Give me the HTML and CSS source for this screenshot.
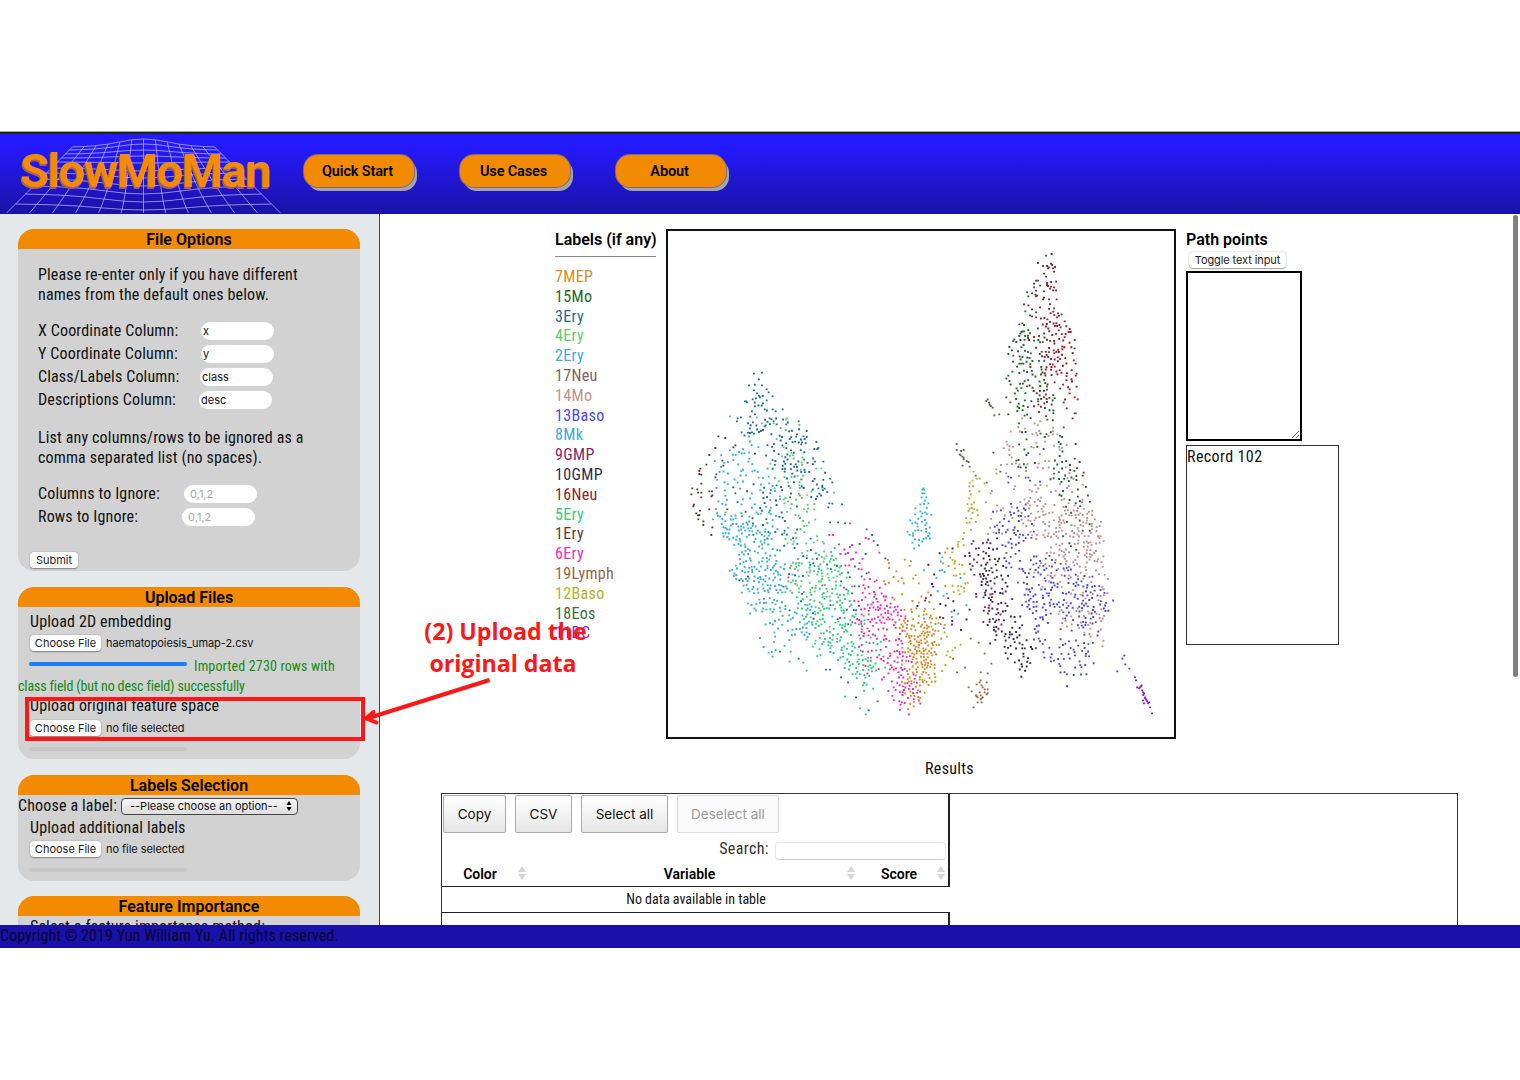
FILE: index.html
```html
<!DOCTYPE html>
<html lang="en">
<head>
<meta charset="utf-8">
<title>SlowMoMan</title>
<link rel="stylesheet" href="styles.css">
</head>
<body>
<div class="app">
  <header class="header">
    <div class="logo">
      <svg class="logo-grid" viewBox="0 0 285 77" width="285" height="77"><path id="grid"></path></svg>
      <span class="logo-text">SlowMoMan</span>
    </div>
    <nav class="nav">
      <a class="nav-btn">Quick Start</a>
      <a class="nav-btn">Use Cases</a>
      <a class="nav-btn">About</a>
    </nav>
  </header>

  <div class="body">
    <aside class="sidebar">
      <section class="card card-options">
        <h2 class="card-title">File Options</h2>
        <div class="options">
          <p class="para">Please re-enter only if you have different<br>names from the default ones below.</p>
          <div class="fields">
            <div class="field"><span class="name w-x">X Coordinate Column:</span><span class="input">x</span></div>
            <div class="field"><span class="name w-x">Y Coordinate Column:</span><span class="input">y</span></div>
            <div class="field"><span class="name w-class">Class/Labels Column:</span><span class="input">class</span></div>
            <div class="field"><span class="name w-desc">Descriptions Column:</span><span class="input">desc</span></div>
          </div>
          <p class="para">List any columns/rows to be ignored as a<br>comma separated list (no spaces).</p>
          <div class="fields">
            <div class="field"><span class="name w-cols">Columns to Ignore:</span><span class="input hint">0,1,2</span></div>
            <div class="field"><span class="name w-rows">Rows to Ignore:</span><span class="input hint">0,1,2</span></div>
          </div>
        </div>
        <button class="btn submit">Submit</button>
      </section>

      <section class="card card-upload">
        <h2 class="card-title">Upload Files</h2>
        <div class="upload-name">Upload 2D embedding</div>
        <div class="file"><button class="btn choose">Choose File</button><span>haematopoiesis_umap-2.csv</span></div>
        <div class="imported"><span class="bar bar-full"></span><span class="imported-first">Imported 2730 rows with</span><br><span class="imported-rest">class field (but no desc field) successfully</span></div>
        <div class="upload-name second">Upload original feature space</div>
        <div class="file"><button class="btn choose">Choose File</button><span>no file selected</span></div>
        <span class="bar bar-empty"></span>
      </section>

      <section class="card card-labels">
        <h2 class="card-title">Labels Selection</h2>
        <div class="choose-label"><span class="choose-name">Choose a label:</span>
          <span class="select">--Please choose an option--<svg width="6" height="10" viewBox="0 0 6 10"><path d="M3 0L5.6 4H.4zM3 10L.4 6h5.2z"/></svg></span></div>
        <div class="upload-name third">Upload additional labels</div>
        <div class="file"><button class="btn choose">Choose File</button><span>no file selected</span></div>
        <span class="bar bar-empty"></span>
      </section>

      <section class="card card-feature">
        <h2 class="card-title">Feature Importance</h2>
        <div class="upload-name method">Select a feature importance method:</div>
      </section>
    </aside>

    <main class="main">
      <div class="top">
        <div class="legend">
          <h3 class="head">Labels (if any)</h3>
          <div class="rule"></div>
          <ul class="legend-list" id="legend"></ul>
        </div>
        <div class="plot"><svg id="plot" viewBox="0 0 506 506" width="506" height="506"></svg></div>
        <div class="path">
          <h3 class="head">Path points</h3>
          <button class="btn toggle">Toggle text input</button>
          <textarea class="points"></textarea>
          <div class="record">Record 102</div>
        </div>
      </div>
      <div class="results-title">Results</div>
      <div class="results">
        <div class="table">
          <div class="tools">
            <button class="tool t-copy">Copy</button><button class="tool t-csv">CSV</button><button class="tool t-sel">Select all</button><button class="tool t-des off">Deselect all</button>
          </div>
          <div class="search"><span>Search:</span><span class="search-input"></span></div>
          <div class="thead">
            <div class="th th-color"><b>Color</b><svg class="sort" viewBox="0 0 8 14"><path d="M4 0l4 6H0zM4 14L0 8h8z"/></svg></div>
            <div class="th th-var"><b>Variable</b><svg class="sort" viewBox="0 0 8 14"><path d="M4 0l4 6H0zM4 14L0 8h8z"/></svg></div>
            <div class="th th-score"><b>Score</b><svg class="sort" viewBox="0 0 8 14"><path d="M4 0l4 6H0zM4 14L0 8h8z"/></svg></div>
          </div>
          <div class="empty">No data available in table</div>
          <div class="tfoot"></div>
        </div>
      </div>
      <div class="scrollbar"></div>
    </main>
  </div>
  <footer class="footer">Copyright © 2019 Yun William Yu. All rights reserved.</footer>
</div>

<div class="mark-box"></div>
<svg class="mark-arrow" width="140" height="60" viewBox="0 0 140 60"><path class="shaft" d="M128.500 10L6 48.500"/><path d="M12.500 42L5 48.500L15.500 52.500"/></svg>
<div class="mark-text">(2) Upload the<br><span class="mark-second">original data</span></div>
<script src="script.js"></script>
</body>
</html>
```
FILE: styles.css
```css
* { box-sizing: border-box; }
body {
  margin: 0;
  padding-top: 131px;
  height: 1080px;
  overflow: hidden;
  background: #fff;
  color: #111;
  font: 16px/20px Roboto, "Liberation Sans", sans-serif;
  font-stretch: 75%;
  letter-spacing: .15px;
  white-space: nowrap;
}
h2, h3, p, ul { margin: 0; padding: 0; }
ul { list-style: none; }
button { font: inherit; padding: 0; color: #222; }

.app { height: 817px; display: flex; flex-direction: column; border-top: 1px solid #9aa3a3; }
.header {
  height: 82px;
  flex: none;
  display: flex;
  border-top: 2px solid #24211f;
  border-bottom: 1px solid #1510b0;
  background: linear-gradient(#241aff, #2419f4 25%, #1a12a6);
}
.logo { width: 304px; position: relative; padding: 10px 0 0 20px; }
.logo-grid { position: absolute; left: 0; top: 2px; }
.logo-grid path { fill: none; stroke: #c9c4ff; stroke-width: .9; opacity: .75; }
.logo-text {
  position: relative;
  display: block;
  font: 700 47px/54px Roboto, sans-serif;
  font-stretch: 100%;
  letter-spacing: -1.400px;
  color: #f28b02;
  text-shadow: -1px 2px 0 #a35b6d;
}
.nav { display: flex; gap: 46px; padding-top: 21px; }
.nav-btn {
  width: 110px;
  height: 32px;
  padding-right: 3px;
  border-radius: 14px;
  background: #f28b02;
  box-shadow: 0 0 0 1px #7b6a7c, 3px 4px 0 #a3a3a8;
  color: #000;
  font-size: 14.500px;
  font-weight: 600;
  font-stretch: 100%;
  letter-spacing: -.15px;
  line-height: 33px;
  text-align: center;
}

.body { flex: 1; min-height: 0; display: flex; overflow: hidden; }
.sidebar {
  width: 380px;
  flex: none;
  padding: 15px 0 0 18px;
  background: #e4e8eb;
  border-right: 1px solid #444;
  overflow: hidden;
}
.card { width: 342px; border-radius: 16px; background: #d2d2d2; overflow: hidden; }
.card-title { height: 20px; background: #f28b02; color: #000; font-size: 16px; font-weight: 600; font-stretch: 100%; letter-spacing: 0; line-height: 21px; text-align: center; }
.card-options { height: 342px; margin-bottom: 16px; }
.card-upload { height: 172px; margin-bottom: 16px; }
.card-labels { height: 106px; margin-bottom: 15px; }
.card-feature { height: 90px; }
.options { padding: 16px 20px 0; }
.fields { margin: 14px 0 17px; }
.field { height: 23px; display: flex; align-items: center; }
.input {
  width: 73px;
  height: 18px;
  margin-top: 1px;
  padding-left: 2px;
  border-radius: 9px;
  background: #fff;
  font: 11px/19px Inter, sans-serif;
  letter-spacing: 0;
}
.hint { padding-left: 6px; color: #a9a9a9; }
.w-x { width: 163px; }
.w-class { width: 162px; }
.w-desc { width: 161px; }
.w-cols { width: 146px; }
.w-rows { width: 144px; }
.btn {
  height: 16px;
  border: 0;
  border-radius: 4px;
  background: #fff;
  box-shadow: 0 .5px 1.500px rgba(0, 0, 0, .4);
  font: 11px/16px Inter, sans-serif;
  display: block;
}
.submit { width: 48px; margin: 24px 0 0 12px; }
.upload-name { padding: 4px 0 0 12px; height: 25px; line-height: 22px; }
.method { padding-top: 0; }
.file { display: flex; gap: 5px; padding-left: 12px; height: 24px; padding-top: 3px; font: 11px/16px Inter, sans-serif; letter-spacing: -.05px; }
.choose { width: 71px; }
.bar { display: block; width: 158px; height: 4px; margin: 8px 0 0 11px; border-radius: 2px; }
.bar-full { display: inline-block; vertical-align: 5px; margin: 0 7px 0 11px; background: #1a7dfa; }
.bar-empty { background: #c6c6c6; margin-top: 6px; }
.imported { height: 40px; color: #138a13; font-size: 14px; line-height: 20px; }
.imported-rest { letter-spacing: -.14px; }
.second { height: 21px; padding-top: 0; line-height: 19px; }
.choose-label { display: flex; height: 22px; align-items: center; }
.choose-name { width: 103px; }
.select {
  width: 177px;
  height: 17px;
  border: 1px solid #444;
  border-radius: 4px;
  background: linear-gradient(#f5f5f5, #dedede);
  display: flex;
  align-items: center;
  justify-content: space-between;
  padding: 0 5px 0 8px;
  font: 11px/15px Inter, sans-serif;
  letter-spacing: 0;
}
.third { padding-top: 0; height: 21px; line-height: 21px; }

.main { flex: 1; position: relative; overflow: hidden; }
.top { display: flex; padding: 15px 0 0 175px; height: 540px; }
.head { font-size: 16px; font-weight: 600; font-stretch: 100%; letter-spacing: 0; line-height: 21px; height: 20px; color: #000; }
.legend { width: 101px; margin-right: 10px; }
.rule { height: 1px; margin: 7px 0 10px; background: #8a8a8a; }
.legend-list li { height: 19.8px; line-height: 19px; letter-spacing: .35px; }
.plot { width: 510px; height: 510px; border: 2px solid #111; margin-right: 10px; }
.plot svg { display: block; }
.toggle { width: 97px; margin: 3px 0 3px 3px; letter-spacing: -.1px; }
.points { display: block; width: 116px; height: 170px; border: 2px solid #000; margin: 0 0 4px; padding: 0; outline: 0; }
.record { width: 153px; height: 200px; border: 1px solid #333; line-height: 22px; letter-spacing: .4px; }
.results-title { width: 1017px; margin-left: 61px; height: 39px; line-height: 30px; text-align: center; letter-spacing: .3px; }
.results { width: 1017px; height: 200px; margin-left: 61px; border: 1px solid #333; }
.table { width: 508px; border-right: 2px solid #222; }
.tools { display: flex; gap: 9px; padding: 1px 0 0 1px; height: 42px; }
.tool {
  height: 38px;
  border: 1px solid #aaa;
  border-radius: 2px;
  background: linear-gradient(#fff, #e6e6e6);
  font: 13.500px/36px Inter, sans-serif;
  letter-spacing: 0;
  color: #111;
}
.t-copy { width: 63px; }
.t-csv { width: 57px; }
.t-sel { width: 87px; }
.t-des { width: 102px; }
.off { border-color: #ddd; background: #fafafa; color: #999; }
.search { display: flex; justify-content: flex-end; gap: 6px; height: 26px; padding-right: 2px; color: #333; line-height: 25px; letter-spacing: .4px; }
.search-input { width: 171px; height: 18px; margin-top: 6px; border: 1px solid #e5e5e5; border-bottom-color: #ccc; border-radius: 4px; }
.thead { display: flex; height: 25px; border-bottom: 1px solid #222; font-size: 14px; font-stretch: 100%; letter-spacing: 0; line-height: 24px; }
.th { position: relative; text-align: center; }
.th b { color: #000; font-weight: 600; }
.sort { position: absolute; right: 0; top: 4px; width: 8px; height: 14px; fill: #d4d4d4; }
.th-color { width: 84px; padding-right: 8px; }
.th-var { width: 329px; padding-right: 2px; }
.th-score { width: 90px; padding-right: 2px; }
.empty { width: 508px; height: 26px; border-bottom: 1px solid #222; background: #fff; font-size: 14px; letter-spacing: 0; line-height: 25px; text-align: center; position: relative; }
.tfoot { height: 30px; }
.scrollbar { position: absolute; right: 2px; top: 1px; width: 5px; height: 462px; border-radius: 3px; background: #808080; }
.footer { height: 23px; flex: none; background: #1911aa; color: #08062e; line-height: 21px; letter-spacing: .06px; }

.mark-box { position: absolute; left: 25px; top: 697px; width: 340px; height: 44px; border: 4px solid #ff1616; }
.mark-arrow { position: absolute; left: 361px; top: 670px; fill: none; stroke: #ff1616; stroke-width: 4; stroke-linecap: round; stroke-linejoin: round; }
.mark-arrow .shaft { stroke-linecap: butt; }
.mark-text { position: absolute; left: 403px; top: 615px; width: 205px; text-align: center; color: #ff1616; font: bold 23.200px/32px "Open Sans", sans-serif; font-stretch: 100%; letter-spacing: 0; }
.mark-second { padding-right: 5px; }
```
FILE: script.js
```js
// Cell types, in legend order, with their colours.
const classes = [
  ['7MEP', '#dd8a22'], ['15Mo', '#25682c'], ['3Ery', '#1f6f94'], ['4Ery', '#5bce70'],
  ['2Ery', '#35aee0'], ['17Neu', '#83605f'], ['14Mo', '#c09190'], ['13Baso', '#4a48f5'],
  ['8Mk', '#35aee0'], ['9GMP', '#8d1f66'], ['10GMP', '#2f2c55'], ['16Neu', '#96212b'],
  ['5Ery', '#2bd080'], ['1Ery', '#5e3c32'], ['6Ery', '#f42cb0'], ['19Lymph', '#94664a'],
  ['12Baso', '#b3b32c'], ['18Eos', '#3c6e40'], ['11DC', '#8022ee'],
];
const legend = document.getElementById('legend');
for (const [name, color] of classes) {
  const li = document.createElement('li');
  li.textContent = name;
  li.style.color = color;
  legend.append(li);
}

// Region origins in plot pixels; region coordinates are thirds of a pixel.
const origin = { L: [2, 129], T: [252, 4], R: [252, 249] };

// Fixed points of the sparse classes.
const fixed = [
  ['1Ery', 'L', [145,229,166,234,196,256,190,262,136,264,118,285,157,302,160,317,109,314,91,326,88,333,88,342,94,344,139,343,136,352,94,371,190,382,67,385,82,388,64,403,84,398,94,398,118,394,126,394,127,406,124,409,94,412,72,434,70,439,79,460,84,466,88,465,90,452,85,478,100,484,100,495,118,448,172,448,127,502,124,525,208,661,234,650,255,281]],
  ['3Ery', 'L', [252,41,276,38,267,58,237,76,255,74,276,76,252,91,290,88,296,97,308,109,261,100,267,107,270,112,258,115,228,124,231,127,225,124,290,121,279,130,255,139,246,154,284,148,308,148,317,154,338,148,255,163,203,175,201,184,213,172,249,187,299,175,305,178,311,184,320,193,215,217,234,218,240,219,246,217,252,221,267,216,273,213,279,210,284,199,287,196,386,184,410,213,410,231,404,237,439,246,445,264,433,267,442,267,460,305,480,356,487,367,457,377,457,382,516,433,487,431,478,430,475,442]],
  ['4Ery', 'L', [180,169,261,172,276,190,311,190,348,178,352,175,388,195,347,210,332,204,320,237,395,307,439,326,454,325,492,398,412,406]],
  ['6Ery', 'L', [540,490,478,525,489,525,507,553,511,582,546,555,587,534,596,537,611,543,534,579,628,578,596,638,620,661,646,673,635,700,355,652,457,676,522,683,510,774]],
  ['3Ery', 'L', [480,487,504,487,525,490,590,508,606,525,623,555,569,552,587,582,646,595,590,640,575,649,546,700,529,688,340,680,359,751,386,896,330,875,468,929,480,929,513,952,534,967,558,1012,596,1051,623,1024]],
  ['2Ery', 'L', [270,834,281,861,308,890,296,878,305,876,317,870,359,905,362,875,400,908,410,932,525,1010,570,1045,587,1063]],
  ['8Mk', 'L', [760,385,757,389,763,389,757,400,763,400,755,412,769,412,775,430,751,433,736,445,751,454,757,460,766,457,736,463,754,469,721,481,727,490,742,491,712,515,736,512,754,512]],
  ['11DC', 'R', [613,527,607,536,616,553,628,566,592,574,645,592,648,601,665,616,651,622,657,625,660,622,666,631,669,637,672,640,675,652,669,661,678,658,681,664,684,670,687,667,672,670,690,682,696,700,675,655,680,661,663,619,670,645]],
  ['19Lymph', 'R', [99,536,135,563,111,577,214,551,194,521,176,488,152,476,161,682,146,622,155,634,182,577,203,580,182,601,179,607,200,607,170,613,185,616,188,622,194,628,203,628,203,640,200,643,179,637,182,646,173,652,170,649,185,655,188,652,182,658,173,667,185,667,194,637,168,646]],
  ['18Eos', 'T', [203,493,199,498,207,503,209,509,212,513,218,518,223,541,238,538]],
  ['17Neu', 'T', [110,627,110,645,123,648,131,645,119,658,122,661,127,665,131,668,131,673,140,678,146,681,128,692,149,695,167,722,200,743]],
  ['12Baso', 'T', [161,710,170,731,179,731,158,737,149,743,194,745,229,716]],
  ['13Baso', 'T', [241,710,265,725,273,728,265,743,371,642,402,716,317,728,325,728,360,740]],
  ['16Neu', 'T', [395,57,369,93,381,93,384,100,387,97,393,86,396,90,399,100,405,96,402,110,378,125,408,140,393,141,381,144,381,150,384,153,393,155,402,157,390,161,399,166,408,166,348,137,342,146,348,167,346,179,351,182,372,169,372,188,369,193,410,193,312,208,325,211,336,223,360,217,336,244,348,247,449,282,446,291,452,291,464,315,464,340,458,354,467,386,470,416,467,422,470,455,449,463,449,475,434,259,422,277,437,297,425,238,414,235,400,230,467,627,464,671,479,681,491,713,488,722,473,493,464,487,458,550,464,535,467,535,440,520,431,502,301,315,324,309,327,315,342,306,357,303]],
  ['15Mo', 'T', [378,62,354,84,372,116,354,137,342,157,360,152,321,172,325,184,336,175,348,184,387,193,316,229,330,241,348,232,402,220,298,268,307,265,312,270,307,289,312,289,304,291,301,296,298,303,283,313,280,318,289,321,268,336,265,357,280,362,298,386,304,386,310,386,265,422,259,431,259,487,271,502,265,538,220,653,289,677,431,577,426,606,422,627]],
  ['6Ery', 'R', [1,671]],
];

// Dense areas: class, region, number of points, outline.
const areas = [
  ['3Ery','L',88,[340,160,385,205,430,260,455,340,470,440,440,440,370,370,310,330,280,260,320,200]],
  ['3Ery','L',16,[250,90,290,130,310,200,220,210,240,150]],
  ['3Ery','L',45,[180,380,350,370,400,500,470,580,430,640,330,560,270,530]],
  ['3Ery','L',24,[340,620,440,560,540,560,580,680,540,840,400,750]],
  ['2Ery','L',110,[150,260,250,220,280,330,330,400,320,540,220,520,140,500,120,450,145,300]],
  ['2Ery','L',50,[150,450,230,490,310,520,300,560,210,560,150,535]],
  ['2Ery','L',130,[190,580,310,560,350,630,340,700,315,770,245,750,220,700,180,630]],
  ['2Ery','L',50,[280,720,420,740,460,790,410,840,310,860,280,800]],
  ['4Ery','L',50,[310,350,400,350,440,370,440,500,490,560,430,600,345,560,330,450]],
  ['4Ery','L',65,[340,620,440,560,510,590,510,700,420,800,350,710]],
  ['4Ery','L',16,[300,300,350,260,430,320,370,400,310,370]],
  ['5Ery','L',185,[390,600,490,570,515,620,545,700,550,830,590,880,620,940,590,990,550,960,480,890,430,880,400,800,375,720,360,690]],
  ['5Ery','L',26,[540,760,620,780,640,900,630,1010,570,1020,540,900]],
  ['6Ery','L',92,[560,700,590,650,630,700,690,750,700,790,610,820,570,850,550,760]],
  ['6Ery','L',98,[565,850,680,810,720,870,740,990,735,1040,690,1052,650,950,585,930]],
  ['6Ery','L',12,[530,540,580,590,580,640,520,620]],
  ['7MEP','L',112,[705,730,780,740,800,770,785,850,798,950,760,1015,705,1055,695,980,680,860,700,790]],
  ['7MEP','L',55,[715,850,780,790,800,900,780,960,740,980,700,950]],
  ['7MEP','L',30,[630,570,710,580,780,690,800,780,660,800]],
  ['8Mk','L',30,[768,425,785,430,785,500,770,570,715,550,738,480]],
  ['8Mk','R',18,[0,220,160,260,150,420,0,460]],
  ['7MEP','R',10,[100,145,80,210,90,300,50,400,90,470,40,500,60,380]],
  ['16Neu','T',80,[375,225,410,230,430,260,455,320,460,420,440,490,420,450,385,420,365,330]],
  ['16Neu','T',22,[330,300,390,350,420,480,430,520,380,560,330,510]],
  ['15Mo','T',92,[310,270,370,260,385,300,345,340,400,380,395,440,415,500,395,550,350,540,300,560,265,480,280,330]],
  ['15Mo','T',22,[300,560,420,590,410,650,350,640,350,720,290,720]],
  ['15Mo','T',18,[390,660,460,690,480,720,450,745,390,740]],
  ['15Mo','R',22,[330,0,500,0,520,150,480,180,420,60]],
  ['15Mo','R',6,[430,100,510,200,500,320,440,300]],
  ['14Mo','T',56,[260,590,300,540,400,560,425,590,460,700,480,750,280,750,220,700]],
  ['14Mo','R',140,[275,5,465,5,505,60,540,130,550,240,480,260,370,250,330,160,285,100]],
  ['14Mo','R',50,[400,100,490,50,535,130,545,240,420,240]],
  ['14Mo','R',80,[370,250,540,225,565,300,550,500,500,470,430,440,400,350,340,300]],
  ['14Mo','R',14,[190,20,280,60,300,200,210,170]],
  ['12Baso','R',50,[148,0,163,0,170,110,120,200,140,330,95,350,85,235,140,130]],
  ['12Baso','R',12,[0,430,60,410,110,500,50,600,0,630]],
  ['13Baso','R',52,[190,80,330,80,345,130,310,220,240,235,220,120]],
  ['13Baso','R',128,[250,240,430,240,500,310,570,340,575,425,500,430,310,400,310,330]],
  ['13Baso','R',92,[310,330,480,320,535,420,530,550,480,595,440,605,405,555,335,505,320,430]],
  ['13Baso','R',16,[420,230,530,320,550,450,480,440]],
  ['10GMP','R',80,[175,185,240,185,260,270,290,400,295,440,215,480,185,340,175,230]],
  ['10GMP','R',42,[210,465,305,440,340,550,330,575,285,585,240,515]],
  ['10GMP','R',14,[20,100,130,220,160,430,30,600,0,400]],
  ['9GMP','R',42,[195,160,210,250,235,330,255,490,225,455,165,390,155,300,135,220]],
  ['9GMP','R',8,[0,340,110,380,100,420,0,460]],
];

// Small deterministic generator, so that every load draws the same plot.
let seed = 20193;
function rnd() {
  seed = (seed * 1664525 + 1013904223) >>> 0;
  return seed / 4294967296;
}
function inside(p, x, y) {
  let hit = false;
  for (let i = 0, j = p.length - 2; i < p.length; j = i, i += 2) {
    if ((p[i + 1] > y) !== (p[j + 1] > y) &&
        x < (p[j] - p[i]) * (y - p[i + 1]) / (p[j + 1] - p[i + 1]) + p[i]) hit = !hit;
  }
  return hit;
}
const placed = [];
const shapes = {};
function add(name, region, x, y) {
  const px = origin[region][0] + x / 3;
  const py = origin[region][1] + y / 3;
  placed.push([px, py]);
  shapes[name] = (shapes[name] || '') + `M${(px - .95).toFixed(1)} ${(py - .95).toFixed(1)}h1.900v1.900h-1.900z`;
}
for (const [name, region, pts] of fixed) {
  for (let i = 0; i < pts.length; i += 2) add(name, region, pts[i], pts[i + 1]);
}
for (const [name, region, count, poly] of areas) {
  const xs = poly.filter((_, i) => i % 2 === 0), ys = poly.filter((_, i) => i % 2);
  const x0 = Math.min(...xs), x1 = Math.max(...xs), y0 = Math.min(...ys), y1 = Math.max(...ys);
  for (let n = 0, tries = 0; n < count && tries < 9000; tries++) {
    let x = x0 + rnd() * (x1 - x0), y = y0 + rnd() * (y1 - y0);
    if (!inside(poly, x, y)) continue;
    // soften the outline so that neighbouring cell types mix
    x += (rnd() + rnd() + rnd() - 1.5) * 16;
    y += (rnd() + rnd() + rnd() - 1.5) * 18;
    const px = origin[region][0] + x / 3, py = origin[region][1] + y / 3;
    if (placed.some(q => Math.hypot(q[0] - px, q[1] - py) < 2.2)) continue;
    add(name, region, x, y);
    n++;
  }
}
const plot = document.getElementById('plot');
for (const [name, color] of classes) {
  const path = document.createElementNS('http://www.w3.org/2000/svg', 'path');
  path.setAttribute('d', shapes[name] || '');
  path.setAttribute('fill', color);
  plot.append(path);
}

// Logo grid: a perspective mesh with a swell at the far side and a dip near the viewer.
const rows = [[11,-8],[14,-6],[18,-4],[22,-2],[26,1],[32,3],[37,5],[43,7],[50,8],[58,8],[68,6],[78,2]];
const point = (r, c) => {
  const [e, bump] = rows[r];
  const half = 71 + (e - 11);
  const u = (c - 6) / 6;
  return `${(143.500 + u * half).toFixed(1)} ${(e + bump * Math.exp(-u * u * 4)).toFixed(1)}`;
};
let mesh = '';
for (let r = 0; r < rows.length; r++) for (let c = 0; c < 13; c++) mesh += (c ? 'L' : 'M') + point(r, c);
for (let c = 0; c < 13; c++) for (let r = 0; r < rows.length; r++) mesh += (r ? 'L' : 'M') + point(r, c);
document.getElementById('grid').setAttribute('d', mesh);
```
